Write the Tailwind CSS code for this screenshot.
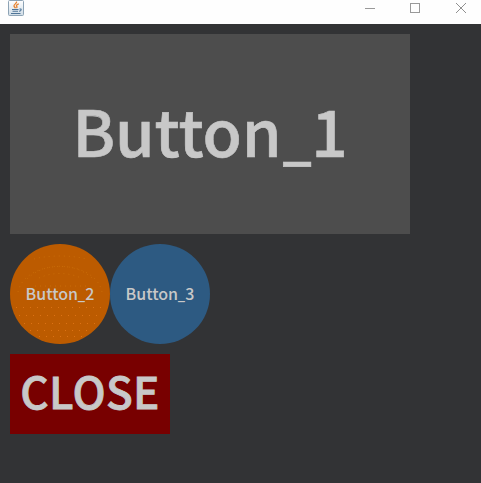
<!DOCTYPE html>
<html lang="en">
<head>
<meta charset="utf-8">
<title>Buttons</title>
<script src="https://cdn.jsdelivr.net/npm/@tailwindcss/browser@4"></script>
</head>
<body class="w-[481px] h-[483px] overflow-hidden flex flex-col bg-[#323335] font-['Noto_Sans_CJK_SC','Noto_Sans',sans-serif] font-medium text-[#c8c8c8]">
<header class="h-6 shrink-0 bg-[#fefefe] flex justify-between">
  <svg class="ml-2 w-4 h-4" viewBox="0 0 16 16" fill="none">
    <defs><linearGradient id="g" x1="0" y1="0" x2="0" y2="1"><stop stop-color="#fff"/><stop offset="1" stop-color="#cfdce6"/></linearGradient></defs>
    <rect x=".5" y=".5" width="15" height="15" rx="1" fill="url(#g)" stroke="#8da3b5"/>
    <path d="M8.500 1.500C9.500 3 5.500 4.500 6 6C6.200 7 7 7.300 7.500 8.300M10.800 3.800C8.500 4.500 8 5.500 8.800 6.500C9.300 7.200 9 7.600 8.500 8.200" stroke="#e8822e" stroke-width="1.300"/>
    <path d="M4 9.500H10.500M4.500 11.300H10M3 13.500H12.500M11.500 9C14 8.500 13.500 10.800 11 11.300" stroke="#4f7598" stroke-width="1.100"/>
  </svg>
  <svg class="w-[131px] h-6" viewBox="0 0 131 24" fill="none" stroke="#999" shape-rendering="crispEdges">
    <path d="M15 8.500H25"/>
    <rect x="60.500" y="3.500" width="9" height="9"/>
    <path d="M106 3L116 13M116 3L106 13" shape-rendering="auto" stroke="#909090"/>
  </svg>
</header>
<main class="p-2.5 flex flex-col items-start gap-2.5">
  <button class="w-[400px] h-[200px] bg-[#4d4d4d] flex items-center justify-center pb-[10px] text-[64px] leading-none tracking-[-0.1px] [-webkit-text-stroke:0.6px_#c8c8c8]"><span>Button<span class="inline-block scale-x-[0.81] mx-[-3.2px]">_</span>1</span></button>
  <div class="flex">
    <button class="relative size-[100px] rounded-full bg-[#bc5b00] flex items-center justify-center pb-[2px] text-[16px] leading-none">
      <svg class="absolute inset-0 size-full" viewBox="0 0 100 100" fill="none" stroke-width="1">
        <g stroke="#c96c08" stroke-dasharray="1 4">
          <path d="M24 15C38 11 62 11 76 15M17 35C34 18 66 18 83 35M8 48C15 14 85 14 92 48M29 34C42 28 58 28 71 34M25 42H76"/>
        </g>
        <g stroke="#dc7214" stroke-dasharray="1 6">
          <path d="M6 63.500H94M9 71.500H91M14 79.500H87M20 86.500H80M29 92.500H72"/>
        </g>
      </svg>
      <span class="relative">Button<span class="inline-block scale-x-[0.81] mx-[-0.9px]">_</span>2</span>
    </button>
    <button class="size-[100px] rounded-full bg-[#2d5a82] flex items-center justify-center pb-[2px] text-[16px] leading-none"><span>Button<span class="inline-block scale-x-[0.81] mx-[-0.9px]">_</span>3</span></button>
  </div>
  <button class="w-40 h-20 bg-[#780000] flex items-center justify-center pb-[8px] text-[44px] leading-none tracking-[0.3px] [-webkit-text-stroke:0.8px_#c8c8c8]">CLOSE</button>
</main>
</body>
</html>
